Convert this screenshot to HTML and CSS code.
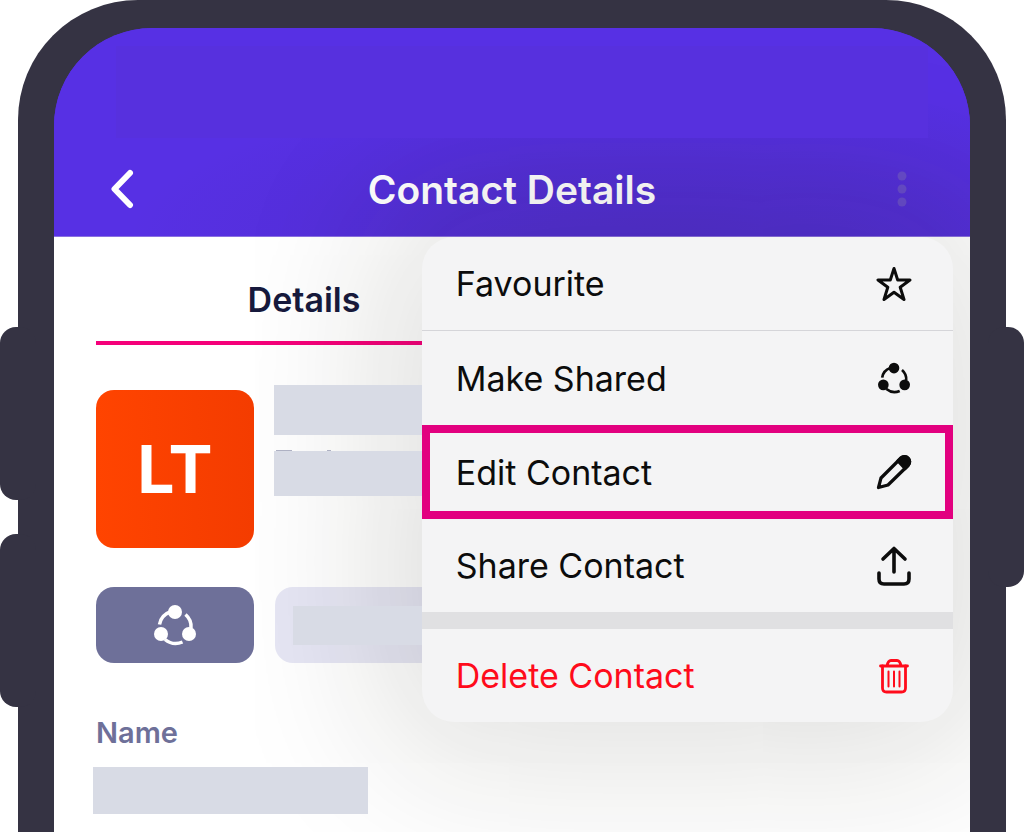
FILE: index.html
```html
<!DOCTYPE html>
<html lang="en">
<head>
    <meta charset="UTF-8">
    <meta name="viewport" content="width=device-width, initial-scale=1.0">
    <title>Contact Details</title>
    <link rel="stylesheet" href="styles.css">
</head>
<body>
    <svg class="sprite" aria-hidden="true">
        <symbol id="shared" viewBox="0 0 42 42">
            <g fill="none" stroke="currentColor" stroke-width="3.500">
                <path d="M5.500 20.500A16 16 0 0 1 16 8"/>
                <path d="M31.500 10.500A16 16 0 0 1 37 24"/>
                <path d="M11 35.500A17 17 0 0 0 28.500 38"/>
            </g>
            <g fill="currentColor">
                <circle cx="21" cy="8" r="7"/>
                <circle cx="7" cy="30" r="7"/>
                <circle cx="35" cy="30" r="7"/>
            </g>
        </symbol>
    </svg>

    <div class="phone">
        <span class="side-button volume-up"></span>
        <span class="side-button volume-down"></span>
        <span class="side-button power"></span>

        <main class="screen">
            <header class="navbar">
                <div class="status-bar"></div>
                <div class="navbar-row">
                    <button class="nav-button" aria-label="Back">
                        <svg width="24" height="40" viewBox="0 0 24 40" fill="none" stroke="#fff" stroke-width="6" stroke-linecap="round" stroke-linejoin="round">
                            <path d="M20 4L4.500 20L20 36"/>
                        </svg>
                    </button>
                    <h1>Contact Details</h1>
                    <button class="nav-button more" aria-label="More">
                        <svg width="10" height="36" viewBox="0 0 10 36" fill="#674bcb">
                            <circle cx="5" cy="5" r="4.500"/>
                            <circle cx="5" cy="18" r="4.500"/>
                            <circle cx="5" cy="31" r="4.500"/>
                        </svg>
                    </button>
                </div>
            </header>

            <div class="content">
                <div class="tabs">
                    <button class="tab">Details</button>
                </div>

                <div class="profile">
                    <div class="avatar">LT</div>
                    <div class="profile-info">
                        <div class="blank blank-title"></div>
                        <div class="blank blank-subtitle"></div>
                    </div>
                </div>

                <div class="chips">
                    <button class="chip chip-shared" aria-label="Shared">
                        <svg width="42" height="42"><use href="#shared"/></svg>
                    </button>
                    <div class="chip chip-tag">
                        <div class="blank blank-tag"></div>
                    </div>
                </div>

                <dl class="field">
                    <dt>Name</dt>
                    <dd class="blank blank-name"></dd>
                </dl>
            </div>

            <!-- Actions menu -->
            <div class="menu">
                <button class="menu-item divided">
                    Favourite
                    <svg width="36" height="36" viewBox="0 0 36 36" fill="none" stroke="currentColor" stroke-width="3" stroke-linejoin="round">
                        <path d="M18 2.500L21.700 14H34L24.200 21.200L28 33.500L18 26.200L8 33.500L11.800 21.200L2 14H14.300Z"/>
                    </svg>
                </button>
                <button class="menu-item">
                    Make Shared
                    <svg class="icon-shared" width="32" height="32"><use href="#shared"/></svg>
                </button>
                <button class="menu-item selected">
                    Edit Contact
                    <svg width="36" height="36" viewBox="0 0 36 36" fill="none" stroke="currentColor" stroke-width="3.200" stroke-linejoin="round">
                        <path d="M2.500 33.500L5 24L25 4C29.500 -.5 37 6.500 32 11.500L12 31Z"/>
                        <path d="M22 7L25 4C29.500 -.5 37 6.500 32 11.500L29 14.500Z" fill="currentColor"/>
                    </svg>
                </button>
                <button class="menu-item short">
                    Share Contact
                    <svg width="36" height="40" viewBox="0 0 36 40" fill="none" stroke="currentColor" stroke-width="3.600" stroke-linecap="round" stroke-linejoin="round">
                        <path d="M18 26V3M7 13L18 2.500L29 13"/>
                        <path d="M3 27V33Q3 38 8 38H28Q33 38 33 33V27"/>
                    </svg>
                </button>
                <button class="menu-item danger">
                    Delete Contact
                    <svg width="36" height="36" viewBox="0 0 36 36" fill="none" stroke="currentColor" stroke-width="2.800" stroke-linecap="round" stroke-linejoin="round">
                        <path d="M4.500 8H31.500M11 8Q12 2.500 15 2.500H21Q24 2.500 25 8"/>
                        <path d="M6.500 8V30Q6.500 34 10.500 34H25.500Q29.500 34 29.500 30V8"/>
                        <path d="M12.500 13.500V28.500M18 13.500V28.500M23.500 13.500V28.500" stroke-width="2"/>
                    </svg>
                </button>
            </div>
        </main>
    </div>
</body>
</html>
```
FILE: styles.css
```css
* {
    margin: 0;
    padding: 0;
    box-sizing: border-box;
}

body {
    background: #fff;
    font-family: Inter, sans-serif;
}

button {
    border: none;
    background: none;
    font-family: inherit;
    color: inherit;
}

svg {
    display: block;
    flex-shrink: 0;
}

.sprite {
    position: absolute;
    width: 0;
    height: 0;
}

.phone {
    position: relative;
    display: flex;
    min-height: 100vh;
    margin: 0 18px;
    padding: 28px 36px 0;
    background: #353343;
    border-radius: 120px 120px 0 0;
}

.side-button {
    position: absolute;
    width: 36px;
    height: 173px;
    background: #353343;
    border-radius: 16px;
}

.volume-up {
    left: -18px;
    top: 327px;
}

.volume-down {
    left: -18px;
    top: 534px;
}

.power {
    right: -18px;
    top: 327px;
    height: 260px;
}

.screen {
    position: relative;
    flex: 1;
    background: linear-gradient(#5730e4 200px, #fff 200px);
    border-radius: 98px 98px 0 0;
    overflow: hidden;
}

/* Header */
.navbar {
    height: 209px;
    padding: 18px 42px 0 56px;
    background: radial-gradient(ellipse 60% 75% at 68% 100%, rgba(38, 30, 60, 0.12), rgba(38, 30, 60, 0.08) 50%, transparent), #5730e4;
    border-bottom: 1px solid #8a70e0;
}

.status-bar {
    position: relative;
    z-index: 3;
    height: 92px;
    margin-left: 6px;
    background: #5730de;
}

.navbar-row {
    display: flex;
    justify-content: space-between;
    align-items: center;
    height: 98px;
    padding-top: 4px;
}

.nav-button {
    width: 24px;
    display: flex;
    justify-content: center;
}

.more {
    margin-right: 14px;
}

h1 {
    font-size: 39px;
    font-weight: 600;
    color: #fff;
}

/* Contact */
.content {
    padding: 0 42px 18px;
}

.tabs {
    display: flex;
    height: 108px;
}

.tab {
    width: 50%;
    padding-top: 20px;
    border-bottom: 4px solid #f5007a;
    color: #171a3d;
    font-size: 34px;
    font-weight: 600;
}

.profile {
    display: flex;
    gap: 20px;
    padding-top: 40px;
}

.avatar {
    display: flex;
    justify-content: center;
    align-items: center;
    width: 158px;
    height: 158px;
    margin-top: 5px;
    background: linear-gradient(90deg, #ff4400, #f43c00);
    border-radius: 18px;
    color: #fff;
    font-size: 66px;
    font-weight: 700;
}

.blank {
    position: relative;
    z-index: 3;
    background: #d8dbe5;
}

.blank-title {
    width: 148px;
    height: 50px;
}

.blank-subtitle {
    width: 148px;
    height: 45px;
    margin-top: 16px;
}

.blank-subtitle::before {
    content: "";
    position: absolute;
    left: 2px;
    top: -1px;
    width: 55px;
    height: 1px;
    background: linear-gradient(90deg, #aeb1c3 16px, transparent 16px, transparent 51px, #aeb1c3 51px);
}

.chips {
    display: flex;
    gap: 21px;
    padding-top: 39px;
}

.chip {
    display: flex;
    align-items: center;
    width: 158px;
    height: 76px;
    border-radius: 18px;
}

.chip-shared {
    justify-content: center;
    background: #6e7099;
    color: #fff;
}

.chip-tag {
    width: 180px;
    padding-left: 18px;
    background: #e6e6f4;
}

.blank-tag {
    width: 129px;
    height: 39px;
}

.field {
    padding-top: 52px;
}

.field dt {
    color: #6e7099;
    font-size: 29px;
    font-weight: 600;
    line-height: 36px;
}

.blank-name {
    width: 275px;
    height: 47px;
    margin: 16px 0 0 -3px;
}

/* Menu */
.menu {
    position: absolute;
    z-index: 2;
    top: 209px;
    right: 17px;
    width: 58%;
    background: #f4f4f5;
    border-radius: 32px;
    box-shadow: 0 0 160px 40px rgba(30, 30, 15, 0.14);
}

.menu-item {
    display: flex;
    justify-content: space-between;
    align-items: center;
    width: 100%;
    height: 94px;
    padding: 0 41px 0 34px;
    color: #0c0c0c;
    font-size: 34px;
}

.icon-shared {
    margin-right: 2px;
}

.divided {
    border-bottom: 1px solid #d5d5d9;
}

.selected {
    padding: 0 33px 0 26px;
    border: 8px solid #e2007f;
}

.short {
    height: 93px;
}

.danger {
    height: 110px;
    border-top: 17px solid #e0e0e2;
    color: #ff0b1b;
}
```
